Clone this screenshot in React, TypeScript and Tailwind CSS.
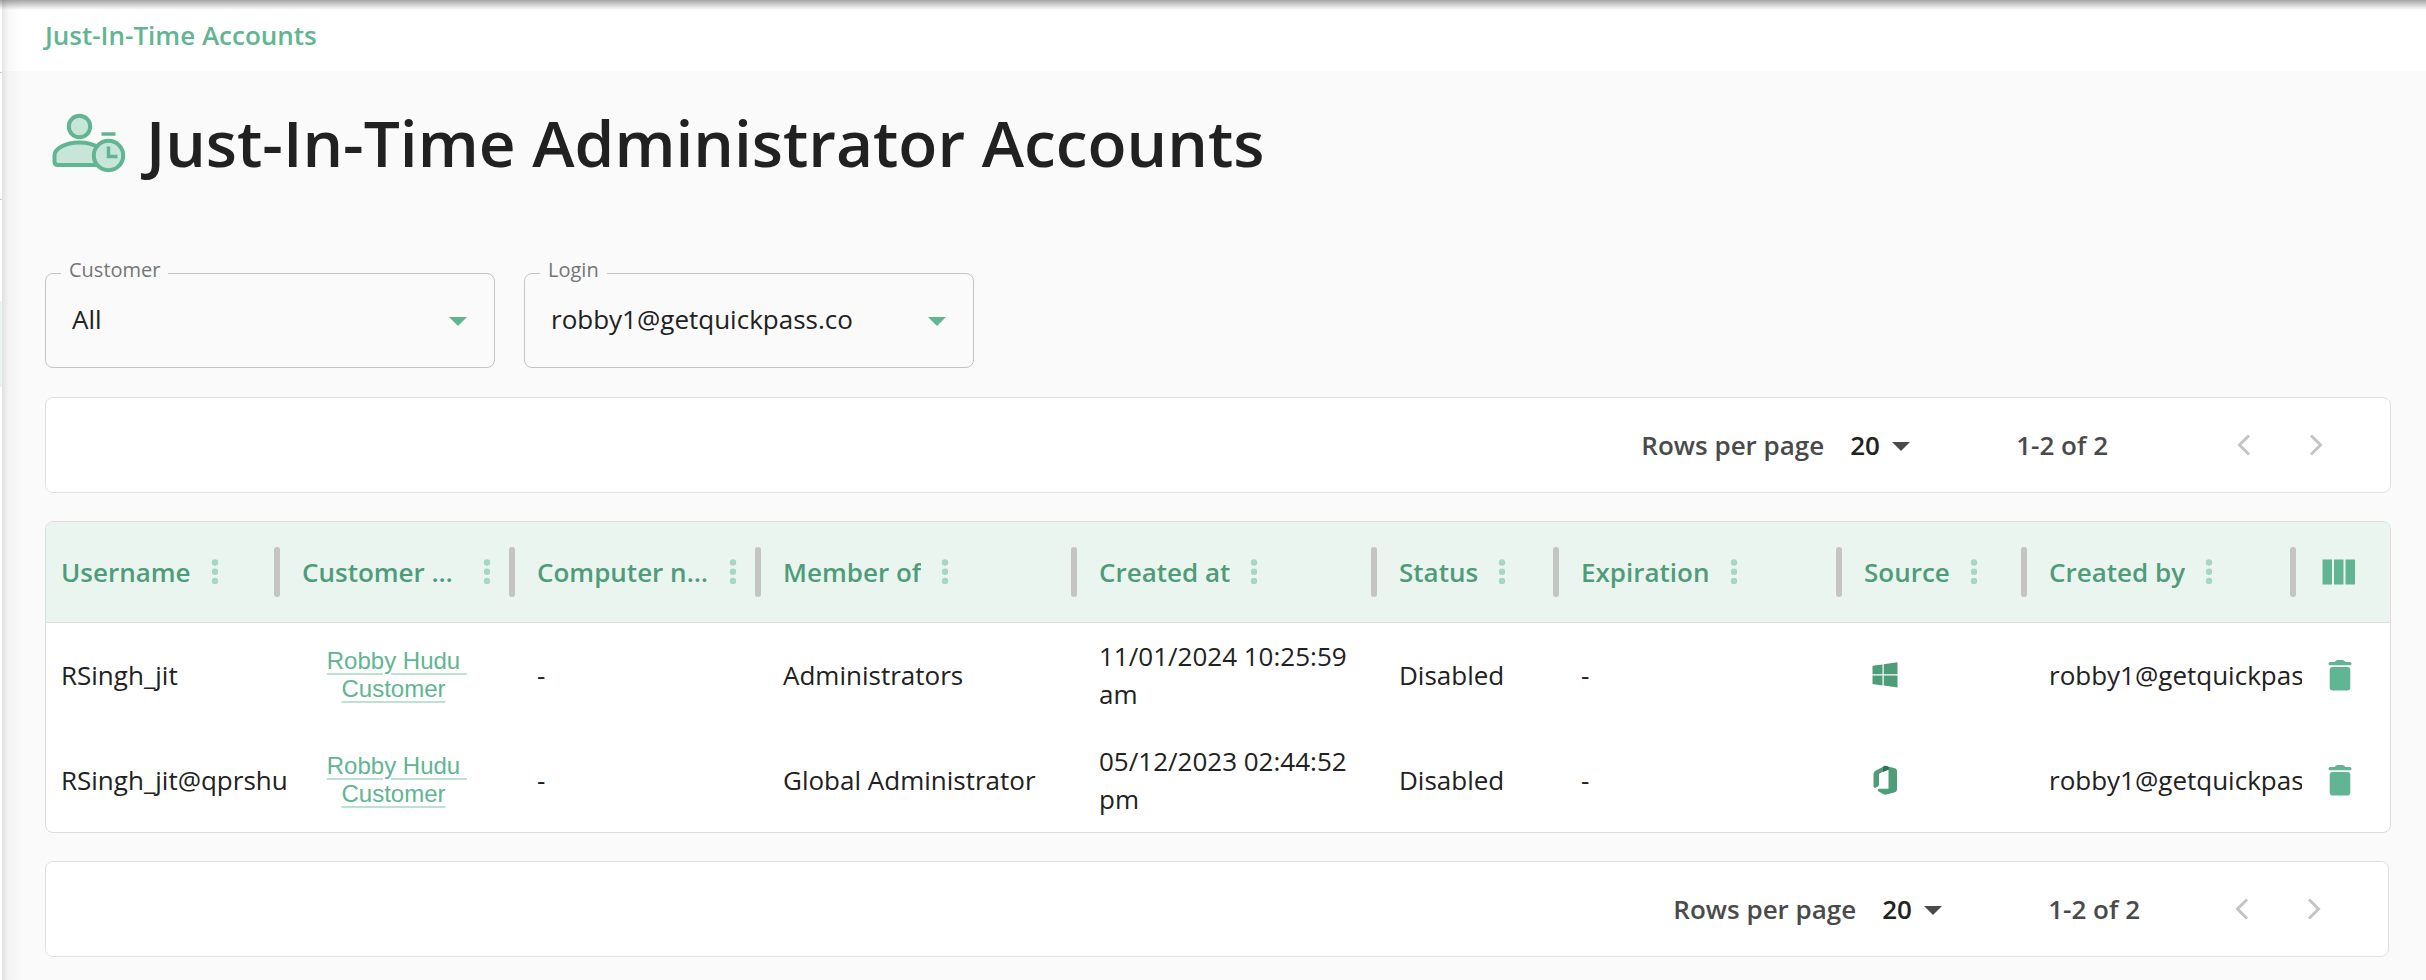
import { useState } from 'react';
import { clsx } from 'clsx';

type Source = 'windows' | 'office';

interface Account {
  username: string;
  customer: string;
  computer: string;
  memberOf: string;
  createdAt: string;
  status: string;
  expiration: string;
  source: Source;
  createdBy: string;
}

const accounts: Account[] = [
  {
    username: 'RSingh_jit',
    customer: 'Robby Hudu Customer',
    computer: '-',
    memberOf: 'Administrators',
    createdAt: '11/01/2024 10:25:59 am',
    status: 'Disabled',
    expiration: '-',
    source: 'windows',
    createdBy: 'robby1@getquickpass.co',
  },
  {
    username: 'RSingh_jit@qprshudu',
    customer: 'Robby Hudu Customer',
    computer: '-',
    memberOf: 'Global Administrator',
    createdAt: '05/12/2023 02:44:52 pm',
    status: 'Disabled',
    expiration: '-',
    source: 'office',
    createdBy: 'robby1@getquickpass.co',
  },
];

const columns = [
  { label: 'Username', width: 'w-[240px]' },
  { label: 'Customer name', width: 'w-[235px]' },
  { label: 'Computer name', width: 'w-[246px]' },
  { label: 'Member of', width: 'w-[316px]' },
  { label: 'Created at', width: 'w-[300px]' },
  { label: 'Status', width: 'w-[182px]' },
  { label: 'Expiration', width: 'w-[283px]' },
  { label: 'Source', width: 'w-[185px]' },
  { label: 'Created by', width: 'w-[269px]' },
];

function AccountClockIcon() {
  return (
    <svg className="h-[60px] w-[74px]" viewBox="0 0 74 60" fill="#c8e5d9" stroke="#61b592" strokeWidth="4">
      <circle cx="27.5" cy="13.5" r="10.7" />
      <path d="M4 52V43C4 35 14 29.500 27 29.500S50 35 50 43V52H7Q3.500 52 2.500 49Z" stroke="none" />
      <path d="M50 52H6Q2.500 52 2.500 48.500V42.500C2.500 36 13 29.500 27 29.500C36 29.500 43 32 47 35" fill="none" />
      <circle cx="56.500" cy="42.500" r="14.700" />
      <path d="M49.500 21H63.500M56.500 33.500V43.500H65.500" fill="none" strokeWidth="3.500" />
    </svg>
  );
}

function WindowsIcon() {
  return (
    <svg className="h-[26px] w-[26px]" viewBox="0 0 26 26" fill="#4f9c79">
      <path d="M.5 3.800 10.500 2.400V12.200H.5ZM11.700 2.200 25.500.3V12.200H11.700ZM.5 13.500H10.500V23.400L.5 22ZM11.700 13.500H25.500V25.500L11.700 23.600Z" />
    </svg>
  );
}

function OfficeIcon() {
  return (
    <svg className="h-[30px] w-[26px]" viewBox="0 0 26 30" fill="#4f9c79">
      <path d="M13 .8 3.500 5.800Q1.500 7 1.500 9V21.500Q1.800 23.500 4 22.500Q7 21.500 7 19V9.800Q7 8.500 8.300 7.900L16.500 4.200V2Z" />
      <path d="M13 .8 23 3.300Q25 4 25 6V24.500Q25 26.500 23 27.200L14.500 29.600Q13 30 11.500 29.300L6 26Q5 24.200 7 23.800H16.500V4.700L11 6.800V2Z" />
      <path d="M13 .8 17 2.200 16.500 4.700 11 6.800V2Z" fill="#356f55" />
    </svg>
  );
}

function TrashIcon() {
  return (
    <svg className="h-8 w-6" viewBox="0 0 24 32" fill="#61b592">
      <path d="M2 3H6.500Q8 1 9.500 1H14.500Q16 1 17.500 3H22Q23.500 3 23.500 4.700T22 6.300H2Q.5 6.300 .5 4.700T2 3Z" />
      <rect x="1.700" y="8" width="20.600" height="23.500" rx="3" />
    </svg>
  );
}

function ColumnsIcon() {
  return (
    <svg className="h-[26px] w-[34px]" viewBox="0 0 34 26" fill="#61b592">
      <path d="M.5.5H10V25.500H.5ZM12 .5H21.500V25.500H12ZM23.500.5H33V25.500H23.500Z" />
    </svg>
  );
}

function DotsIcon() {
  return (
    <svg className="h-[26px] w-[8px]" viewBox="0 0 8 26" fill="#a5d8c3">
      <circle cx="4" cy="3.500" r="3.200" />
      <circle cx="4" cy="12.700" r="3.200" />
      <circle cx="4" cy="21.900" r="3.200" />
    </svg>
  );
}

function Caret({ className }: { className: string }) {
  return (
    <svg className={clsx('pointer-events-none absolute h-[9px] w-[18px]', className)} viewBox="0 0 18 9" fill="currentColor">
      <path d="M0 0H18L9 9Z" />
    </svg>
  );
}

function Chevron({ next }: { next?: boolean }) {
  return (
    <svg className="h-[22px] w-[14px]" viewBox="0 0 14 22" fill="none" stroke="#c4c4c4" strokeWidth="3">
      <path d={next ? 'M2 1.500 11.500 11 2 20.500' : 'M12 1.500 2.500 11 12 20.500'} />
    </svg>
  );
}

interface FilterProps {
  id: string;
  label: string;
  options: string[];
}

function Filter({ id, label, options }: FilterProps) {
  const [value, setValue] = useState(options[0]);

  return (
    <div className="relative w-[450px]">
      <label htmlFor={id} className="absolute -top-[17px] left-4 bg-[#fafafa] px-2 text-[20px] leading-7 text-[#757575]">
        {label}
      </label>
      <select
        id={id}
        value={value}
        onChange={(e) => setValue(e.target.value)}
        className="block h-[95px] w-full appearance-none rounded-lg border border-[#c4c4c4] bg-transparent pb-0.5 pl-[26px] pr-16 text-[26px] text-[#212121]"
      >
        {options.map((option) => (
          <option key={option}>{option}</option>
        ))}
      </select>
      <Caret className="right-7 top-[44px] text-[#61b592]" />
    </div>
  );
}

interface PaginationProps {
  id: string;
  className: string;
  rangeClassName: string;
}

function Pagination({ id, className, rangeClassName }: PaginationProps) {
  return (
    <div
      className={clsx(
        'flex h-24 items-center justify-end rounded-lg border border-[#e0e0e0] bg-white pr-[67px] text-[26px] font-semibold text-[#4a4a4a]',
        className
      )}
    >
      <label htmlFor={id}>Rows per page</label>
      <div className="relative ml-[26px]">
        <select id={id} className="block w-[60px] appearance-none bg-transparent text-[#212121]">
          <option>20</option>
          <option>50</option>
        </select>
        <Caret className="right-0 top-4" />
      </div>
      <span className={rangeClassName}>1-2 of 2</span>
      <button type="button" aria-label="Previous page" disabled>
        <Chevron />
      </button>
      <button type="button" aria-label="Next page" disabled className="ml-[58px]">
        <Chevron next />
      </button>
    </div>
  );
}

function AccountRow({ account }: { account: Account }) {
  return (
    <tr className="h-[105px]">
      <td className="overflow-hidden whitespace-nowrap pl-[15px]">{account.username}</td>
      <td className="pl-4 pr-9 text-center">
        <a
          href="#customer"
          className="block whitespace-pre-wrap font-['Liberation_Sans',Arial,sans-serif] text-2xl leading-7 text-[#61b592] underline decoration-[#bfe1d3] decoration-2 underline-offset-4"
        >
          {account.customer}
        </a>
      </td>
      <td className="px-4">{account.computer}</td>
      <td className="px-4">{account.memberOf}</td>
      <td className="px-4">{account.createdAt}</td>
      <td className="px-4">{account.status}</td>
      <td className="px-4">{account.expiration}</td>
      <td className="px-6">{account.source === 'windows' ? <WindowsIcon /> : <OfficeIcon />}</td>
      <td className="overflow-hidden whitespace-nowrap px-4">{account.createdBy}</td>
      <td className="pl-[26px]">
        <button type="button" aria-label="Delete account" className="block">
          <TrashIcon />
        </button>
      </td>
    </tr>
  );
}

export default function App() {
  return (
    <div className="relative flex min-h-screen bg-[#fafafa] font-['Open_Sans',sans-serif] text-[#212121]">
      <div className="pointer-events-none absolute inset-x-0 top-0 z-10 h-2.5 bg-gradient-to-b from-black/35 to-transparent" />

      <aside className="flex w-0.5 shrink-0 flex-col bg-white">
        <div className="h-[73px] border-b border-[#c4c4c4]" />
        <div className="h-[127px] border-b border-[#c4c4c4]" />
        <div className="mt-[101px] h-[86px] bg-[#ebf5f0]" />
      </aside>

      <div className="relative min-w-0 flex-1">
        <div className="pointer-events-none absolute inset-y-0 left-0 w-5 bg-gradient-to-r from-black/10 via-black/3 via-30% to-transparent" />

        <header className="flex h-[71px] items-center bg-white pl-[43px]">
          <a href="#accounts" className="text-[26px] font-semibold text-[#61b592]">
            Just-In-Time Accounts
          </a>
        </header>

        <main className="pb-[22px] pl-[43px] pr-[35px]">
          <div className="flex h-[144px] items-center pl-[7px]">
            <AccountClockIcon />
            <h1 className="ml-5 text-[64px] font-semibold leading-none">Just-In-Time Administrator Accounts</h1>
          </div>

          <div className="mt-[58px] flex gap-[29px]">
            <Filter id="customer" label="Customer" options={['All']} />
            <Filter id="login" label="Login" options={['robby1@getquickpass.co']} />
          </div>

          <Pagination id="rows-top" className="mt-[29px]" rangeClassName="ml-[106px] mr-[129px]" />

          <div className="mt-7 overflow-hidden rounded-lg border border-[#dcdcdc] bg-white">
            <table className="w-full table-fixed text-left text-[26px] leading-[38px]">
              <thead>
                <tr className="h-[100px] border-b border-[#dcdcdc] bg-[#ebf5f0] text-[#4f9c79]">
                  {columns.map((column) => (
                    <th key={column.label} className={clsx('relative px-4 font-semibold first:pl-[15px]', column.width)}>
                      <div className="flex items-center">
                        <span className="min-w-0 truncate">{column.label}</span>
                        <button
                          type="button"
                          aria-label={`${column.label} options`}
                          className="ml-1.5 flex w-9 shrink-0 justify-center"
                        >
                          <DotsIcon />
                        </button>
                      </div>
                      <span className="absolute right-1.5 top-[25px] h-[50px] w-1.5 rounded-full bg-[#c4c4c4]" />
                    </th>
                  ))}
                  <th className="w-[88px] pl-5">
                    <button type="button" aria-label="Choose columns" className="block">
                      <ColumnsIcon />
                    </button>
                  </th>
                </tr>
              </thead>
              <tbody>
                {accounts.map((account) => (
                  <AccountRow key={account.username} account={account} />
                ))}
              </tbody>
            </table>
          </div>

          <Pagination id="rows-bottom" className="mr-0.5 mt-7" rangeClassName="ml-[106px] mr-[95px]" />
        </main>
      </div>
    </div>
  );
}
